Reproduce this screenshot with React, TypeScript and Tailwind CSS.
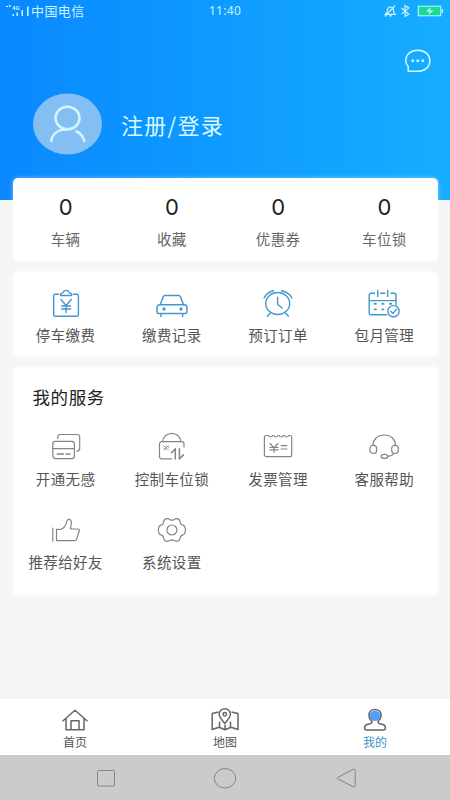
import React from 'react';

interface Item {
    label: string;
    icon: React.ReactNode;
}

interface IconProps {
    children: React.ReactNode;
    width?: number;
}

const Icon: React.FC<IconProps> = ({ children, width = 1.2 }) => (
    <svg
        viewBox="0 0 32 32"
        className="w-8 h-8 shrink-0"
        fill="none"
        stroke="currentColor"
        strokeWidth={width}
        strokeLinecap="round"
        strokeLinejoin="round"
    >
        {children}
    </svg>
);

const TabIcon: React.FC<{ children: React.ReactNode }> = ({ children }) => (
    <svg viewBox="0 0 32 28" className="w-8 h-7 shrink-0" fill="none" stroke="#666" strokeWidth="1.5" strokeLinejoin="round">
        {children}
    </svg>
);

const stats = [
    { label: '车辆', value: 0 },
    { label: '收藏', value: 0 },
    { label: '优惠券', value: 0 },
    { label: '车位锁', value: 0 },
];

const actions: Item[] = [
    {
        label: '停车缴费',
        icon: (
            <Icon width={1.4}>
                <path d="M8.500 6.300H5.300a1.600 1.600 0 0 0-1.600 1.600v18.800a1.600 1.600 0 0 0 1.600 1.600h21.500a1.600 1.600 0 0 0 1.600-1.600V7.900a1.600 1.600 0 0 0-1.600-1.600h-3.200" />
                <path d="M10.500 7.500c-.4-1.600.5-2.400 2.400-2.600.4-1.500 1.500-2.500 3.200-2.500s2.800 1 3.200 2.500c1.900.2 2.800 1 2.400 2.600z" />
                <path d="M10.900 11.500l5.200 6 5.200-6M16.100 17.500v7M11.600 18h9M11.600 21h9" />
            </Icon>
        ),
    },
    {
        label: '缴费记录',
        icon: (
            <Icon width={1.5}>
                <path d="M4.300 16.800L7 9.200c.5-1.300 1.200-1.800 2.500-1.800h12.700c1.300 0 2 .5 2.500 1.800l2.800 7.600" />
                <path d="M3.800 16.800h24.400a2.700 2.700 0 0 1 2.700 2.700v4.400a1.700 1.700 0 0 1-1.700 1.700H2.700A1.700 1.700 0 0 1 1 23.900v-4.400a2.700 2.700 0 0 1 2.800-2.700zM5 25.800v2.600M26.600 25.800v2.600" />
                <circle cx="8" cy="21" r=".9" fill="currentColor" />
                <circle cx="25" cy="21" r=".9" fill="currentColor" />
            </Icon>
        ),
    },
    {
        label: '预订订单',
        icon: (
            <Icon width={1.4}>
                <ellipse cx="15.700" cy="15.500" rx="12" ry="11" />
                <path d="M15.600 9.300v7l4.500 3.700M8 25.300l-2.600 2.900M23.800 25.300l2.600 2.900" />
                <path d="M2 10c2-3.800 5-6.200 9.500-7.200M30 10c-2.200-3.800-5.500-6.200-10.500-7.200" />
            </Icon>
        ),
    },
    {
        label: '包月管理',
        icon: (
            <Icon width={1.4}>
                <path d="M6.500 5.300H3.200A2 2 0 0 0 1.200 7.300v17.500a2 2 0 0 0 2 2h15.500M23 5.300h3a2 2 0 0 1 2 2V17M1.200 12.600H28M12.500 5.300h4.500M9.700 2.400v6M19.700 2.400v6" />
                <path d="M6.700 15.800h1.200M14.300 15.800h1.200M22 15.800h1.200M6.700 21.400h1.200M14.300 21.400h1.200" strokeWidth="1.900" />
                <circle cx="25.500" cy="23.200" r="5.600" />
                <path d="M22.800 23.200l2.200 2.200 3.500-4" />
            </Icon>
        ),
    },
];

const services: Item[] = [
    {
        label: '开通无感',
        icon: (
            <Icon>
                <path d="M7.800 7.500V6a2.500 2.500 0 0 1 2.500-2.500h17A2.500 2.500 0 0 1 29.700 6v11a3 3 0 0 1-2.700 3.200" />
                <rect x="2.800" y="10.400" width="21.600" height="17.200" rx="2.500" />
                <path d="M2.800 17.700h21.600" />
                <path d="M7.200 23h6.300M16 23h4" strokeWidth="1.400" />
            </Icon>
        ),
    },
    {
        label: '控制车位锁',
        icon: (
            <Icon>
                <path d="M6.800 10.500a9 8.200 0 0 1 18 0" />
                <path d="M15.500 27.900H5.700a2.200 2.200 0 0 1-2.200-2.200V12.900a2.200 2.200 0 0 1 2.200-2.200h20.100a2.200 2.200 0 0 1 2.200 2.200V16" />
                <path d="M7.800 15l4.700 3.700M10.500 14.700l2.200 1.700M12.500 14.700l-4.700 4M8 17l2 1.800" strokeWidth=".8" />
                <path d="M15.500 21.700l3.800-4v10.200M23.400 17.700v10.200l4-4" strokeWidth="1.500" />
            </Icon>
        ),
    },
    {
        label: '发票管理',
        icon: (
            <Icon>
                <path d="M5.600 4.500H4.200a1.800 1.800 0 0 0-1.800 1.800v17.400a2 2 0 0 0 2 2h23.300a2 2 0 0 0 2-2V6.300a1.800 1.800 0 0 0-1.800-1.800h-1.500c-.3 2-3.600 2-3.900 0h-1.400c-.3 2-3.600 2-3.900 0h-1.400c-.3 2-3.600 2-3.900 0h-1.400c-.3 2-3.600 2-3.900 0z" />
                <path d="M8 12.500l4 4.500 4-4.500M12 17v4.300M7.800 16.500h8.400M7.800 18.800h8.400M19.200 14.700h5.800M19.200 18h5.800" />
            </Icon>
        ),
    },
    {
        label: '客服帮助',
        icon: (
            <Icon>
                <path d="M5 14.500C5 8.500 9.500 4 16.300 4s11.200 4.500 11.200 10.500" />
                <rect x="2" y="14.300" width="6.600" height="8.200" rx="3" />
                <rect x="23.700" y="14.300" width="6.600" height="8.200" rx="3" />
                <ellipse cx="16.400" cy="25.400" rx="3.300" ry="2" />
                <path d="M19.800 25.200c3.200 0 5-.9 5.900-2.700" />
            </Icon>
        ),
    },
    {
        label: '推荐给好友',
        icon: (
            <Icon>
                <path d="M2.800 14v13.200M6.500 15.300v11.300h18.200c1 0 1.600-.5 1.900-1.400l2.700-8.500c.3-1-.3-1.700-1.300-1.700h-6.700c-.8 0-1-.5-.8-1.200.7-2.300 1.200-4.300.8-6.300-.5-2.600-3.700-2.800-4.400-.4-.9 3.700-2.800 7-5.900 8.200z" />
            </Icon>
        ),
    },
    {
        label: '系统设置',
        icon: (
            <Icon>
                <circle cx="15.900" cy="16" r="5" />
                <path d="M11.800 4.700c1.500 0 2.200 1.500 4.100 1.500s2.600-1.500 4.100-1.500c1.800 0 3.800 1.300 4.100 3 .2 1.600.4 3 2.600 3.400 1.800.3 2.700 2.800 2.700 4.900s-.9 4.600-2.700 4.900c-2.200.4-2.400 1.800-2.600 3.400-.3 1.700-2.300 3-4.100 3-1.500 0-2.200-1.500-4.100-1.500s-2.600 1.500-4.100 1.500c-1.800 0-3.800-1.300-4.100-3-.2-1.600-.4-3-2.600-3.400-1.800-.3-2.700-2.800-2.700-4.900s.9-4.600 2.700-4.900c2.200-.4 2.400-1.800 2.600-3.400.3-1.700 2.300-3 4.100-3z" />
            </Icon>
        ),
    },
];

const tabs = [
    {
        label: '首页',
        active: false,
        icon: (
            <TabIcon>
                <path d="M3.500 15.200L16 4.300l12.500 10.900M7 12.500v11.200h18V12.500M12 23.700v-9h8v9" />
            </TabIcon>
        ),
    },
    {
        label: '地图',
        active: false,
        icon: (
            <TabIcon>
                <path d="M9.500 6L3.200 7.500v16l6.800-2.300 6 2.600 6-2.600 7 2.300v-16L22.500 6M16 18.800v5M10.500 15.500v5.700M21.500 15.500v5.700" />
                <path d="M15.800 17.500c-3.800-4.200-5.600-6.500-5.600-9.200a5.600 5.600 0 0 1 11.200 0c0 2.700-1.800 5-5.600 9.200z" fill="white" />
                <circle cx="15.800" cy="8.200" r="1.700" />
            </TabIcon>
        ),
    },
    {
        label: '我的',
        active: true,
        icon: (
            <TabIcon>
                <path d="M12.800 15c-1.700-1.300-2.800-3.200-2.800-5.500 0-3.800 2.200-6 6-6s6 2.200 6 6c0 2.300-1.100 4.200-2.800 5.500-.4 1.500.1 2.300 1.500 2.700l3.300.8c1.700.5 2.400 1.900 2.400 3.600 0 1.200-.6 1.900-1.800 1.900H7.400c-1.200 0-1.800-.7-1.800-1.900 0-1.700.7-3.100 2.400-3.600l3.300-.8c1.400-.4 1.900-1.200 1.500-2.700z" />
                <circle cx="16" cy="9.800" r="5.200" fill="#4da0fa" stroke="none" />
            </TabIcon>
        ),
    },
];

const StatusBar = () => (
    <div className="flex items-center justify-between h-[21px] pl-[5px] pr-[7px] text-[#c9f6ff]">
        <div className="flex items-center w-[150px]">
            <svg viewBox="0 0 25 14" className="w-[25px] h-[14px]" fill="currentColor">
                <path d="M1 2h2v1H1zM4 1h1.500v2H4zM7.500 10h1.500v2H7.500zM11.500 8.500H13V12h-1.500zM16.500 6H18v6h-1.500zM22 2.500h1.600V12H22z" />
                <text x="7" y="5.500" fontSize="6" fontWeight="700" fontFamily="Roboto, sans-serif">4G</text>
            </svg>
            <span className="ml-[1px] text-[13px] leading-[20px] tracking-[0.4px] whitespace-nowrap">中国电信</span>
        </div>
        <span className="font-['Noto_Sans'] text-[12px] leading-[20px] tracking-[0.3px]">11:40</span>
        <div className="flex items-center justify-end w-[148px]">
            <svg viewBox="0 0 60 14" className="w-[60px] h-[14px]" fill="none" stroke="currentColor" strokeWidth="1.200">
                <path d="M2.500 10.300h9.500c-1.300-1-1.300-2.500-1.600-4.500-.3-1.800-1.300-2.800-3-2.800S4.800 4 4.500 5.800c-.3 2-.6 3.500-2 4.500zM6 11.800h2.800M12 1.500L2 12.500" />
                <path d="M18.500 4l7.300 6.200-3.700 2.300V1.500l3.700 2.400-7.300 6.200" />
                <rect x="35.300" y="2.200" width="22.500" height="9.600" fill="#17dd94" strokeWidth="1" />
                <path d="M59.300 5v4" />
                <path d="M48 3l-5 4.500h3.700L45.500 11l5-4.600h-3.700z" fill="currentColor" stroke="none" />
            </svg>
        </div>
    </div>
);

const Grid: React.FC<{ items: Item[]; className: string }> = ({ items, className }) => (
    <div className={`grid grid-cols-4 text-[14.500px] leading-[20px] tracking-[0.4px] text-[#555] ${className}`}>
        {items.map(item => (
            <div key={item.label} className="flex flex-col items-center">
                {item.icon}
                <span className="whitespace-nowrap">{item.label}</span>
            </div>
        ))}
    </div>
);

export default function App() {
    return (
        <div className="w-[450px] h-[800px] flex flex-col overflow-hidden bg-[#f5f5f5] font-['Noto_Sans_CJK_SC',sans-serif]">
            <header className="h-[200px] shrink-0 bg-linear-to-r from-[#0b88ff] to-[#18adff]">
                <StatusBar />
                <div className="flex justify-end pt-[26px] pr-[18px]">
                    <svg viewBox="0 0 28 28" className="w-7 h-7" fill="none" stroke="#d5faff" strokeWidth="1.500" strokeLinejoin="round">
                        <path d="M4.200 24.300V19.500C2.600 17.900 1.800 16 1.800 13.700 1.800 7.500 6.800 3.200 13.800 3.200s12 4.300 12 10.500-5 10.600-12 10.600z" />
                        <path d="M7.500 13.700h2.600M12.500 13.700h2.600M17.500 13.700h2.600" strokeWidth="2.600" />
                    </svg>
                </div>
                <div className="flex items-center h-[62px] mt-[18px] pl-[33px]">
                    <svg viewBox="0 0 70 62" className="w-[70px] h-[62px]" fill="none" stroke="#d3f5ff" strokeWidth="2.500" strokeLinecap="round">
                        <ellipse cx="34.500" cy="31" rx="34.500" ry="30.500" fill="#84bff4" stroke="none" />
                        <ellipse cx="34.500" cy="25" rx="12" ry="11.300" />
                        <path d="M18.300 48c1-7.200 7-11.700 16.200-11.700M43.500 38.500c4 1.800 6.800 5 7.700 9.500" />
                    </svg>
                    <span className="ml-[18px] text-[22px] leading-[30px] tracking-[1.300px] text-[#d9f9ff]">注册/登录</span>
                </div>
            </header>

            <main className="flex-1 flex flex-col gap-[11px] -mt-[22px] px-[12.500px]">
                <section className="h-[83px] shrink-0 grid grid-cols-4 bg-white rounded-[5px] shadow-[0_0_5px_rgba(255,255,255,0.400)]">
                    {stats.map(stat => (
                        <div key={stat.label} className="flex flex-col items-center pt-[17px]">
                            <span className="font-['Inter'] text-[22px] leading-[24px] text-[#222]">{stat.value}</span>
                            <span className="mt-[10px] text-[14.500px] leading-[20px] tracking-[0.4px] text-[#666]">{stat.label}</span>
                        </div>
                    ))}
                </section>

                <section className="h-[84px] shrink-0 bg-white rounded-[5px] shadow-[0_0_8px_rgba(255,255,255,0.800)]">
                    <Grid items={actions} className="pt-[16px] gap-y-4 [&_svg]:text-[#4398cb] [&_svg]:mb-[5px]" />
                </section>

                <section className="h-[228px] shrink-0 bg-white rounded-[5px] shadow-[0_0_8px_rgba(255,255,255,0.800)]">
                    <h2 className="pt-[17px] pl-[20px] text-[17.500px] leading-[25px] tracking-[0.6px] text-[#222]">我的服务</h2>
                    <Grid items={services} className="pt-[22px] gap-y-[25px] [&_svg]:text-[#858585] [&_svg]:mb-[6px]" />
                </section>
            </main>

            <nav className="h-[56px] shrink-0 grid grid-cols-3 bg-white">
                {tabs.map(tab => (
                    <div key={tab.label} className="flex flex-col items-center pt-[7px]">
                        {tab.icon}
                        <span className={`mt-px text-[12px] leading-[14px] ${tab.active ? 'text-[#3e93c4]' : 'text-[#555]'}`}>{tab.label}</span>
                    </div>
                ))}
            </nav>

            <footer className="h-[45px] shrink-0 flex items-center justify-center gap-24 bg-[#cbcbcb]">
                <svg viewBox="0 0 24 24" className="w-6 h-6" fill="none" stroke="#858585">
                    <rect x="4.500" y="4.500" width="17" height="15.500" rx="1" />
                </svg>
                <svg viewBox="0 0 24 24" className="w-6 h-6" fill="none" stroke="#858585">
                    <ellipse cx="12" cy="12.300" rx="10.700" ry="9.700" />
                </svg>
                <svg viewBox="0 0 24 24" className="w-6 h-6" fill="none" stroke="#858585" strokeLinejoin="round">
                    <path d="M5 11.300L20.500 3.200c1-.4 1.700 0 1.700 1v15.700c0 1-.7 1.400-1.700 1L5 13c-.9-.5-.9-1.200 0-1.700z" />
                </svg>
            </footer>
        </div>
    );
}
